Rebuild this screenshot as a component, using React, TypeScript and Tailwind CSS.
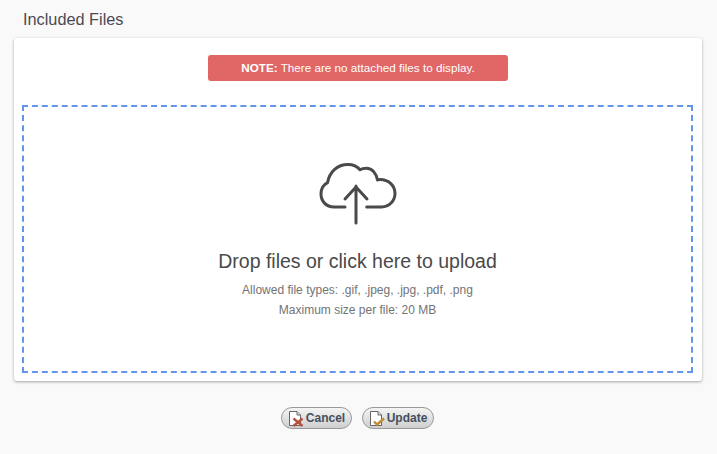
export default function App() {
  return (
    <div className="w-[717px] h-[454px] bg-[#f9f9f9] overflow-hidden font-['Liberation_Sans',Arial,sans-serif] px-[14px]">
      <h2 className="h-[38px] pt-[10px] pl-[9px] text-[16.3px] leading-[19px] font-normal text-[#4a4a55]">Included Files</h2>
      <div className="w-[688px] h-[343px] bg-white rounded-[3px] shadow-[0_1px_3px_rgba(0,0,0,0.35)] pt-[17px] px-[8px]">
        <div className="mx-auto w-[300px] h-[26px] rounded-[3px] bg-[#e16666] text-white text-[11.7px] leading-[26px] text-center">
          <b>NOTE:</b> There are no attached files to display.
        </div>
        <div className="mt-[24px] w-[671px] h-[268px] border-2 border-dashed border-[#6495ed] flex flex-col items-center">
          <svg width="80" height="66" viewBox="0 0 80 66" fill="none" stroke="#4a4a4a" strokeWidth="3" strokeLinecap="round" strokeLinejoin="round" className="mt-[54px]">
            <path d="M27 46H16C8 46 3 40 3 33C3 27.500 6 23.500 9.500 21.700C11.500 11 19 3.500 30 3.500C35 3.500 39 5 42 8.800C44 7.500 46 7.200 48.500 7.200C54 7.200 58 12 59.500 19C60.500 18.700 61 18.500 62 18.500C71 18.500 77 25 77 32.500C77 40 71 46 63.700 46H48.700" />
            <path d="M38 62V25M27 38L38 26L49 38" />
          </svg>
          <div className="mt-[22px] text-[19.5px] leading-[24px] text-[#4a4a4a]">Drop files or click here to upload</div>
          <div className="mt-[7px] text-[12px] leading-[20px] text-[#737373] text-center">
            <div>Allowed file types: .gif, .jpeg, .jpg, .pdf, .png</div>
            <div>Maximum size per file: 20 MB</div>
          </div>
        </div>
      </div>
      <div className="mt-[26px] flex justify-center gap-[10px] pr-[2px]">
        <button className="h-[22px] w-[71px] rounded-[11px] border border-[#999] bg-gradient-to-b from-[#f4f4f4] to-[#cfcfcf] flex items-center justify-center gap-[1px] text-[12px] font-bold text-[#44505f]">
          <svg width="17" height="17" viewBox="0 0 17 17">
            <path d="M1.500 1.500H9L12.500 5V15.500H1.500Z" fill="#fff" stroke="#666" />
            <path d="M9 1.500V5H12.500" fill="#ddd" stroke="#666" />
            <path d="M5.500 8.500L14.500 16M14.500 8.500L5.500 16" stroke="#b9503f" strokeWidth="2.400" />
          </svg>
          Cancel
        </button>
        <button className="h-[22px] w-[72px] rounded-[11px] border border-[#999] bg-gradient-to-b from-[#f4f4f4] to-[#cfcfcf] flex items-center justify-center gap-[1px] text-[12px] font-bold text-[#44505f]">
          <svg width="17" height="17" viewBox="0 0 17 17">
            <path d="M1.500 1.500H9L12.500 5V15.500H1.500Z" fill="#fff" stroke="#666" />
            <path d="M9 1.500V5H12.500" fill="#ddd" stroke="#666" />
            <path d="M5 11.500L8 14.500L15 8.500" fill="none" stroke="#c08a35" strokeWidth="2.400" />
          </svg>
          Update
        </button>
      </div>
    </div>
  );
}
